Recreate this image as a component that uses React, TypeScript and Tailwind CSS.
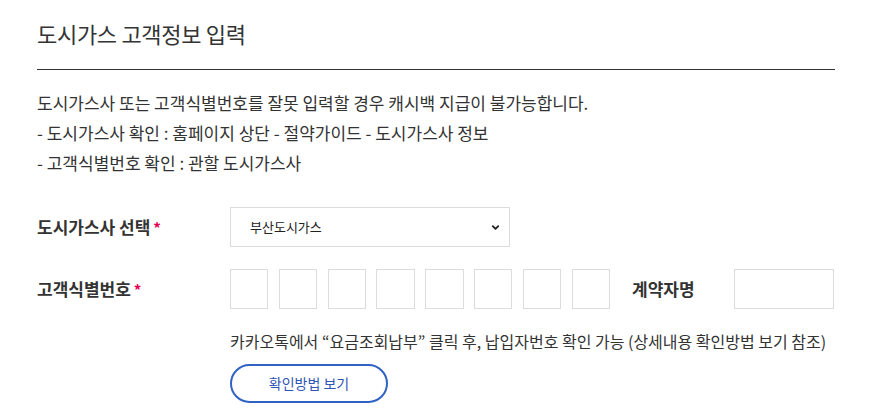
import { ChevronDown } from "lucide-react";

const font = { fontFamily: '"Noto Sans CJK KR", "Noto Sans", sans-serif' };

function Required() {
  return <span className="ml-[3px] text-[15px] font-bold text-[#e5004f]">*</span>;
}

export default function App() {
  const boxes = Array.from({ length: 8 });

  return (
    <div className="h-[415px] w-full bg-white text-[#333]" style={font}>
      <div className="ml-[37px] w-[798px]">
        {/* heading */}
        <div className="h-[70px] border-b border-[#333] pt-[18px]">
          <h1 className="text-[22px] leading-[30px] font-normal tracking-[-0.3px] text-[#333]">
            도시가스 고객정보 입력
          </h1>
        </div>

        {/* notice */}
        <div className="mt-[18px] text-[17px] leading-[30px] text-[#333]">
          <p>도시가스사 또는 고객식별번호를 잘못 입력할 경우 캐시백 지급이 불가능합니다.</p>
          <p>- 도시가스사 확인 : 홈페이지 상단 - 절약가이드 - 도시가스사 정보</p>
          <p>- 고객식별번호 확인 : 관할 도시가스사</p>
        </div>

        {/* gas company select */}
        <div className="mt-[29px] flex items-center">
          <div className="w-[193px] text-[17px] font-semibold text-[#333]">
            도시가스사 선택<Required />
          </div>
          <div className="flex h-[40px] w-[280px] items-center justify-between border border-[#dcdcdc] pl-[19px] pr-[8px]">
            <span className="text-[13px] text-[#222]">부산도시가스</span>
            <ChevronDown className="h-[11px] w-[11px] text-[#222]" strokeWidth={4} />
          </div>
        </div>

        {/* customer id */}
        <div className="mt-[22px] flex items-center">
          <div className="w-[193px] text-[17px] font-semibold text-[#333]">
            고객식별번호<Required />
          </div>
          <div className="grid w-[380px] grid-cols-8 gap-x-[10.5px]">
            {boxes.map((_, i) => (
              <div key={i} className="h-[40px] border border-[#dcdcdc]" />
            ))}
          </div>
          <div className="ml-[22px] w-[102px] text-[17px] font-semibold text-[#333]">계약자명</div>
          <div className="h-[40px] w-[100px] border border-[#dcdcdc]" />
        </div>

        {/* help */}
        <div className="ml-[193px]">
          <p className="mt-[17px] text-[16px] leading-[30px] text-[#333]">
            카카오톡에서 “요금조회납부” 클릭 후, 납입자번호 확인 가능 (상세내용 확인방법 보기 참조)
          </p>
          <button className="mt-[8px] flex h-[39px] w-[158px] items-center justify-center rounded-full border-2 border-[#2f62c4] text-[14px] text-[#2f55b5]">
            확인방법 보기
          </button>
        </div>
      </div>
    </div>
  );
}
